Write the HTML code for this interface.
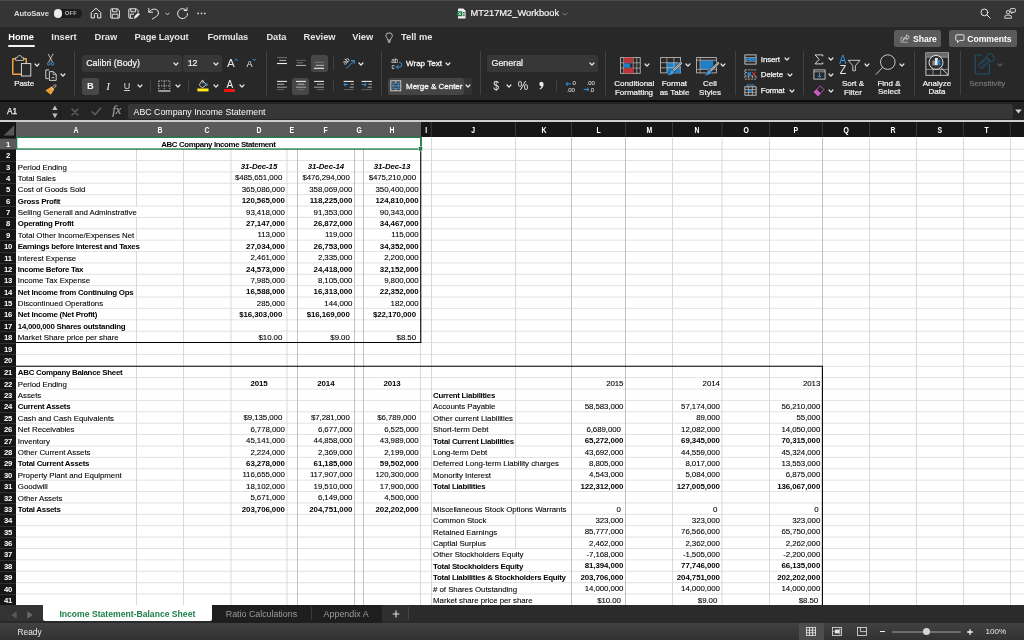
<!DOCTYPE html>
<html lang="en"><head><meta charset="utf-8"><title>MT217M2_Workbook</title>
<style>
*{box-sizing:border-box;margin:0;padding:0}
html,body{width:1024px;height:640px;overflow:hidden;background:#282828}
body{font-family:"Liberation Sans",sans-serif;color:#fff;-webkit-font-smoothing:antialiased}
#app{will-change:transform;position:relative;width:1024px;height:640px;overflow:hidden;background:#282828}
.abs{position:absolute}
svg{display:block;overflow:visible}
/* title bar */
#titlebar{position:absolute;left:0;top:0;width:1024px;height:27px;background:#353535;border-top:1px solid #4b4b4b}
#ribbon{position:absolute;left:0;top:27px;width:1024px;height:73px;background:#282828}
.t{position:absolute;white-space:nowrap;line-height:1}
.tab{position:absolute;top:32.1px;font-size:9.3px;font-weight:bold;color:#e4e4e4;white-space:nowrap;line-height:10px}
.tab.on{color:#fff}
.lbl{position:absolute;font-size:8px;color:#e6e6e6;white-space:nowrap;line-height:9px;text-align:center}
.vsep{position:absolute;width:1px;background:#3e3e3e;top:51px;height:44px}
.box{position:absolute;background:#363636;border-radius:2.5px}
.btnon{position:absolute;background:#454545;border-radius:2.5px}
/* formula bar */
#fbar{position:absolute;left:0;top:100px;width:1024px;height:22.3px;background:#242424;border-top:2.1px solid #0b0b0b}
#fbar .line{position:absolute;left:0;top:18.3px;width:1024px;height:1.7px;background:#cdcdcd}
#fbar .under{position:absolute;left:0;top:20px;width:1024px;height:0.4px;background:#3a3a3a}
/* column header */
#colhdr{position:absolute;left:0;top:122.1px;width:1024px;height:14.6px;background:#161616}
.ch{position:absolute;top:0;height:14.6px;background:#161616;color:#fff;font-weight:bold;font-size:8.2px;line-height:17.8px;text-align:center;overflow:hidden}
.ch.sel{background:#5b5b5b}
.corner{position:absolute;left:0;top:0;width:16px;height:14.6px;background:#161616}
/* grid */
#grid{position:absolute;left:0;top:0;width:1024px;height:605px;overflow:hidden;pointer-events:none}
#grid:before{content:"";position:absolute;left:0;top:136.8px;width:1024px;height:468.2px;background:#fff}
#gl{position:absolute;left:0;top:0}
#rowhdr{position:absolute;left:0;top:0;width:16px;height:605px}
#rowhdr:before{content:"";position:absolute;left:0;top:136.8px;width:16px;height:468.2px;background:#161616}
.rh{position:absolute;left:0;width:16px;height:11.42px;line-height:11.5px;color:#fff;font-weight:bold;font-size:7.7px;text-align:center;letter-spacing:-0.2px;border-top:1px solid #303030;overflow:hidden}
.rh.sel{background:#5b5b5b}
.c{position:absolute;height:11.42px;line-height:13.4px;font-size:7.9px;color:#000;white-space:nowrap;letter-spacing:-0.05px;-webkit-text-stroke:0.09px #000}
.c.b{font-weight:bold;letter-spacing:-0.27px;-webkit-text-stroke:0}
.c.i{font-style:italic}
.c.n{letter-spacing:-0.08px;margin-top:-0.4px}
.c.n.b{letter-spacing:-0.08px}
.c.m{text-align:center}
.c.r{text-align:right}
/* bottom */
#tabbar{position:absolute;left:0;top:605px;width:1024px;height:18.4px;background:#2b2b2b}
#status{position:absolute;left:0;top:623.4px;width:1024px;height:16.6px;background:linear-gradient(#414141,#323232)}

.ch span{display:inline-block;transform:scaleX(0.84)}

</style></head>
<body>
<div id="app">
<div id="titlebar">
  <div class="t" style="left:14px;top:8.6px;font-size:7.6px;font-weight:bold;color:#dedede">AutoSave</div>
  <div class="abs" style="left:53.5px;top:7.6px;width:28.5px;height:9.8px;border-radius:5px;background:#1c1c1c"></div>
  <div class="abs" style="left:53.6px;top:8.1px;width:8.8px;height:8.8px;border-radius:50%;background:#ececec"></div>
  <div class="t" style="left:64.8px;top:9.6px;font-size:5.9px;font-weight:bold;color:#b9b9b9;letter-spacing:0.1px">OFF</div>
  <!-- home -->
  <svg class="abs" style="left:90px;top:5.6px" width="12" height="12" viewBox="0 0 12 12" fill="none" stroke="#e8e8e8" stroke-width="1"><path d="M1.2 5.6 L6 1.2 L10.8 5.6 V11 H7.6 V7.4 Q7.6 6.4 6 6.4 Q4.4 6.4 4.4 7.4 V11 H1.2 Z" stroke-linejoin="round"/></svg>
  <!-- save -->
  <svg class="abs" style="left:109.6px;top:7px" width="10.2" height="11" viewBox="0 0 11 11" preserveAspectRatio="none" fill="none" stroke="#e8e8e8" stroke-width="1"><path d="M1.6 0.8 H8.2 L10.2 2.6 V9.4 Q10.2 10.2 9.4 10.2 H1.6 Q0.8 10.2 0.8 9.4 V1.6 Q0.8 0.8 1.6 0.8 Z"/><path d="M2.8 0.8 V3.8 H7.6 V0.8"/><path d="M2.4 10.2 V6.2 H8.6 V10.2"/></svg>
  <!-- save as -->
  <svg class="abs" style="left:128.3px;top:7px" width="12" height="11" viewBox="0 0 12 11" fill="none" stroke="#e8e8e8" stroke-width="1"><path d="M5 10.2 H1.6 Q0.8 10.2 0.8 9.4 V1.6 Q0.8 0.8 1.6 0.8 H8.2 L10.2 2.6 V4.4"/><path d="M2.8 0.8 V3.8 H7.6 V0.8"/><path d="M2.4 10.2 V6.2 H6"/><path d="M6.2 10.4 L6.9 8 L10.2 4.9 L11.6 6.3 L8.4 9.6 Z" fill="#e8e8e8" stroke-width="0.6"/></svg>
  <!-- undo -->
  <svg class="abs" style="left:148.3px;top:5.6px" width="12" height="13" viewBox="0 0 12 13" fill="none" stroke="#e8e8e8" stroke-width="1" stroke-linecap="round" stroke-linejoin="round"><path d="M0.8 1.4 V5.2 H4.6"/><path d="M1 5 Q3.2 1.6 6.8 2 Q10.6 2.6 10.6 6 Q10.6 8.2 7.6 10 L4.4 12"/></svg>
  <svg class="abs" style="left:164.6px;top:10.6px" width="5" height="4" viewBox="0 0 5 4" fill="none" stroke="#d0d0d0" stroke-width="1"><path d="M0.6 0.8 L2.5 2.8 L4.4 0.8"/></svg>
  <!-- redo (circular arrow) -->
  <svg class="abs" style="left:175.6px;top:5.6px" width="13" height="13" viewBox="0 0 13 13" fill="none" stroke="#e8e8e8" stroke-width="1" stroke-linecap="round" stroke-linejoin="round"><path d="M10.6 3.6 A5 5 0 1 0 11.6 6.6"/><path d="M8.2 3.6 H11 V0.8"/></svg>
  <!-- dots -->
  <svg class="abs" style="left:197px;top:10.8px" width="9" height="3" viewBox="0 0 9 3" fill="#e0e0e0"><circle cx="1.2" cy="1.4" r="0.85"/><circle cx="4.5" cy="1.4" r="0.85"/><circle cx="7.8" cy="1.4" r="0.85"/></svg>
  <!-- excel doc icon -->
  <svg class="abs" style="left:457px;top:7px" width="9" height="11" viewBox="0 0 9 11"><path d="M1.6 0.4 H6.2 L8.6 2.8 V10 Q8.6 10.6 8 10.6 H1.6 Q1 10.6 1 10 V1 Q1 0.4 1.6 0.4 Z" fill="#f2f2f2"/><rect x="0" y="3.2" width="5.4" height="5" rx="0.6" fill="#1d7a45"/><path d="M1.5 4.4 L3.9 7 M3.9 4.4 L1.5 7" stroke="#fff" stroke-width="0.8"/><rect x="6" y="4" width="1.8" height="1" fill="#1d7a45"/><rect x="6" y="5.6" width="1.8" height="1" fill="#1d7a45"/><rect x="6" y="7.2" width="1.8" height="1" fill="#1d7a45"/></svg>
  <div class="t" style="left:470.4px;top:8px;font-size:9.3px;color:#f4f4f4;-webkit-text-stroke:0.2px #f4f4f4">MT217M2_Workbook</div>
  <svg class="abs" style="left:561.6px;top:11.2px" width="6" height="4" viewBox="0 0 6 4" fill="none" stroke="#858585" stroke-width="1"><path d="M0.5 0.7 L3 3.2 L5.5 0.7"/></svg>
  <!-- search -->
  <svg class="abs" style="left:980px;top:7.4px" width="11" height="11" viewBox="0 0 11 11" fill="none" stroke="#e8e8e8" stroke-width="1" stroke-linecap="round"><circle cx="4.4" cy="4.4" r="3.4"/><path d="M7 7 L10.2 10.2"/></svg>
  <!-- share people -->
  <svg class="abs" style="left:1004px;top:7px" width="12" height="11" viewBox="0 0 12 11" fill="none" stroke="#e8e8e8" stroke-width="0.9"><circle cx="4" cy="4.2" r="1.7"/><path d="M0.8 10.2 V9 Q0.8 7.2 2.6 7.2 H5.6 Q7.4 7.2 7.4 9 V10.2 Z" stroke-linejoin="round"/><rect x="6.2" y="0.6" width="5.2" height="3.6" rx="0.8"/><path d="M7.6 4.2 V5.6 L9 4.2"/></svg>
</div>
<div id="ribbon">
  <!-- tabs: coordinates relative to ribbon (top:27) -->
  <div class="tab on" style="left:8.2px;top:5.1px">Home</div>
  <div class="abs" style="left:8px;top:18.2px;width:27px;height:1.8px;border-radius:1px;background:#f2f2f2"></div>
  <div class="tab" style="left:51.3px;top:5.1px">Insert</div>
  <div class="tab" style="left:94.5px;top:5.1px">Draw</div>
  <div class="tab" style="left:134.5px;top:5.1px;letter-spacing:-0.12px">Page Layout</div>
  <div class="tab" style="left:207.5px;top:5.1px;letter-spacing:-0.17px">Formulas</div>
  <div class="tab" style="left:266.4px;top:5.1px">Data</div>
  <div class="tab" style="left:303.5px;top:5.1px">Review</div>
  <div class="tab" style="left:352.2px;top:5.1px">View</div>
  <svg class="abs" style="left:385.4px;top:5.2px" width="8.6" height="11.2" viewBox="0 0 10 13" fill="none" stroke="#e4e4e4" stroke-width="0.9" stroke-linecap="round"><path d="M3.2 9 Q3.2 7.8 2.2 6.8 Q1 5.6 1 4.4 Q1 1 4.8 1 Q8.6 1 8.6 4.4 Q8.6 5.6 7.4 6.8 Q6.4 7.8 6.4 9 Z"/><path d="M3.4 10.6 H6.2 M4 12 H5.6"/></svg>
  <div class="tab" style="left:401px;top:5.1px">Tell me</div>
  <!-- share / comments -->
  <div class="abs" style="left:894.2px;top:3.2px;width:47px;height:16.6px;border-radius:2.5px;background:#5b5b5b"></div>
  <svg class="abs" style="left:899.6px;top:6.4px" width="10" height="10" viewBox="0 0 10 10" fill="none" stroke="#e4e4e4" stroke-width="0.8" stroke-linecap="round" stroke-linejoin="round"><path d="M2.6 4.4 H1 V9.2 H7.6" stroke="#bdbdbd"/><path d="M3.2 7.2 Q3.6 3.8 6.8 3.6 V1.6 L9.4 4.2 L6.8 6.6 V5 Q4.6 5 3.2 7.2 Z"/></svg>
  <div class="t" style="left:913px;top:7.9px;font-size:8.6px;font-weight:bold;color:#fff">Share</div>
  <div class="abs" style="left:948.7px;top:3.2px;width:68.2px;height:16.6px;border-radius:2.5px;background:#5b5b5b"></div>
  <svg class="abs" style="left:954.6px;top:6.6px" width="10" height="10" viewBox="0 0 10 10" fill="none" stroke="#f0f0f0" stroke-width="0.9" stroke-linejoin="round"><path d="M1.4 0.8 H8.4 Q9 0.8 9 1.4 V5.8 Q9 6.4 8.4 6.4 H4.6 L2.6 8.6 V6.4 H1.4 Q0.8 6.4 0.8 5.8 V1.4 Q0.8 0.8 1.4 0.8 Z"/></svg>
  <div class="t" style="left:967.2px;top:7.9px;font-size:8.6px;font-weight:bold;color:#fff">Comments</div>
</div>
<div id="rb">
<svg class="abs" style="left:11px;top:54px" width="22" height="24" viewBox="0 0 22 24" ><rect x="1.75" y="4.7" width="13.5" height="15.6" rx="0.5" fill="none" stroke="#f2a43c" stroke-width="1.5"/><path d="M4.6 6.4 V3.6 H6.4 Q6.6 1.4 8.6 1.4 Q10.6 1.4 10.8 3.6 H12.6 V6.4 Z" fill="#282828" stroke="#d4d4d4" stroke-width="0.8" stroke-linejoin="round"/><rect x="10.4" y="9.6" width="9.4" height="12.4" fill="#282828" stroke="#e4e4e4" stroke-width="0.9"/></svg>
<svg class="abs" style="left:34.05px;top:62.50px" width="5.9" height="4.2" viewBox="0 0 5.9 4.2" fill="none" stroke="#ececec" stroke-width="1.2" stroke-linecap="round" stroke-linejoin="round"><path d="M1 1 L2.95 3.2 L4.9 1"/></svg>
<div class="t" style="top:78.80px;font-size:8px;line-height:9.20px;color:#f0f0f0;-webkit-text-stroke:0.22px #f0f0f0;left:-35.9px;width:120px;text-align:center;letter-spacing:-0.15px;">Paste</div>
<svg class="abs" style="left:46px;top:52.6px" width="10" height="14" viewBox="0 0 10 14" ><path d="M2.1 0.8 L6.5 9.2 M7.1 0.8 L2.7 9.2" stroke="#e8e8e8" stroke-width="0.75" fill="none"/><circle cx="2.7" cy="10.8" r="1.3" fill="none" stroke="#3a9be6" stroke-width="0.9"/><circle cx="6.5" cy="10.8" r="1.3" fill="none" stroke="#3a9be6" stroke-width="0.9"/></svg>
<svg class="abs" style="left:44.6px;top:68.8px" width="13" height="13" viewBox="0 0 13 13" ><path d="M3.6 9.6 H0.8 V0.9 H4.2" fill="none" stroke="#e0e0e0" stroke-width="0.9"/><path d="M4.4 2.6 H8.4 L11.2 5.4 V11.4 H4.4 Z" fill="#282828" stroke="#e0e0e0" stroke-width="0.9" stroke-linejoin="round"/><path d="M8.2 2.8 V5.6 H11" fill="none" stroke="#e0e0e0" stroke-width="0.7"/><path d="M6.6 8.6 H9.2" stroke="#e0e0e0" stroke-width="0.8"/></svg>
<svg class="abs" style="left:59.55px;top:72.50px" width="5.9" height="4.2" viewBox="0 0 5.9 4.2" fill="none" stroke="#ececec" stroke-width="1.2" stroke-linecap="round" stroke-linejoin="round"><path d="M1 1 L2.95 3.2 L4.9 1"/></svg>
<svg class="abs" style="left:44.8px;top:84.4px" width="12" height="12" viewBox="0 0 12 12" ><path d="M7.2 3.4 L9.6 0.9 Q10.4 0.5 10.9 1.1 Q11.4 1.7 10.8 2.4 L8.4 4.6" fill="none" stroke="#e0e0e0" stroke-width="0.75" stroke-linejoin="round"/><path d="M6.6 2.6 L9.2 5.4 L5.8 10.8 L0.4 6.6 Z" fill="#f2a43c"/><path d="M6.2 3 L8.8 5.8" stroke="#ffd9a0" stroke-width="0.9"/><path d="M2.2 7.4 L4.8 5 M3.8 8.8 L6.2 6.2" stroke="#c47a18" stroke-width="0.5"/></svg>
<div class="abs" style="left:74.00px;top:51.2px;width:1px;height:43.80px;background:#414141"></div>
<div class="abs" style="left:82.3px;top:55px;width:99.60px;height:16.70px;background:#373737;border-radius:2.5px"></div>
<div class="t" style="top:58.48px;font-size:8.9px;line-height:10.23px;color:#f4f4f4;-webkit-text-stroke:0.22px #f4f4f4;left:86.2px;">Calibri (Body)</div>
<svg class="abs" style="left:173.45px;top:61.60px" width="5.9" height="4.2" viewBox="0 0 5.9 4.2" fill="none" stroke="#ececec" stroke-width="1.2" stroke-linecap="round" stroke-linejoin="round"><path d="M1 1 L2.95 3.2 L4.9 1"/></svg>
<div class="abs" style="left:183.3px;top:55px;width:38.50px;height:16.70px;background:#373737;border-radius:2.5px"></div>
<div class="t" style="top:58.48px;font-size:8.9px;line-height:10.23px;color:#f4f4f4;-webkit-text-stroke:0.22px #f4f4f4;left:187.8px;letter-spacing:-0.3px;">12</div>
<svg class="abs" style="left:213.45px;top:61.60px" width="5.9" height="4.2" viewBox="0 0 5.9 4.2" fill="none" stroke="#ececec" stroke-width="1.2" stroke-linecap="round" stroke-linejoin="round"><path d="M1 1 L2.95 3.2 L4.9 1"/></svg>
<div class="t" style="top:55.93px;font-size:11.6px;line-height:13.34px;color:#e8e8e8;left:227px;">A</div>
<svg class="abs" style="left:233.6px;top:57.6px" width="5" height="4" viewBox="0 0 5 4" ><path d="M0.8 2.6 L2.3 0.9 L3.8 2.6" fill="none" stroke="#3a9be6" stroke-width="0.9"/></svg>
<div class="t" style="top:59.01px;font-size:9.2px;line-height:10.58px;color:#e8e8e8;left:246.4px;">A</div>
<svg class="abs" style="left:252px;top:57.8px" width="5" height="4" viewBox="0 0 5 4" ><path d="M0.8 0.9 L2.3 2.6 L3.8 0.9" fill="none" stroke="#3a9be6" stroke-width="0.9"/></svg>
<div class="abs" style="left:82.3px;top:77.6px;width:16.60px;height:17.10px;background:#474747;border-radius:2.5px"></div>
<div class="t" style="top:80.80px;font-size:9.4px;line-height:10.81px;color:#f4f4f4;font-weight:bold;left:30.5px;width:120px;text-align:center;">B</div>
<div class="t" style="top:80.56px;font-size:9.8px;line-height:11.27px;color:#e8e8e8;-webkit-text-stroke:0.1px #e8e8e8;left:48.2px;width:120px;text-align:center;font-family:'Liberation Serif',serif;font-style:italic;">I</div>
<div class="t" style="top:80.53px;font-size:9px;line-height:10.35px;color:#dcdcdc;left:67px;width:120px;text-align:center;">U</div>
<div class="abs" style="left:123.8px;top:90.4px;width:6.4px;height:0.8px;background:#d0d0d0"></div>
<svg class="abs" style="left:137.05px;top:84.10px" width="5.9" height="4.2" viewBox="0 0 5.9 4.2" fill="none" stroke="#ececec" stroke-width="1.2" stroke-linecap="round" stroke-linejoin="round"><path d="M1 1 L2.95 3.2 L4.9 1"/></svg>
<div class="abs" style="left:150.00px;top:80.4px;width:1px;height:11.80px;background:#414141"></div>
<svg class="abs" style="left:158.4px;top:79.6px" width="13" height="13" viewBox="0 0 13 13" ><g stroke="#d8d8d8" stroke-width="0.75" stroke-dasharray="1.3 1" fill="none"><path d="M0.7 0.9 H12 M0.7 0.9 V10.4 M11.9 0.9 V10.4 M6.3 0.9 V10.4 M0.7 5.8 H12"/></g><path d="M0.3 11 H12.3" stroke="#f4f4f4" stroke-width="1.1"/></svg>
<svg class="abs" style="left:174.85px;top:84.10px" width="5.9" height="4.2" viewBox="0 0 5.9 4.2" fill="none" stroke="#ececec" stroke-width="1.2" stroke-linecap="round" stroke-linejoin="round"><path d="M1 1 L2.95 3.2 L4.9 1"/></svg>
<div class="abs" style="left:188.30px;top:80.4px;width:1px;height:11.80px;background:#414141"></div>
<svg class="abs" style="left:196.6px;top:79.4px" width="13" height="13" viewBox="0 0 13 13" ><path d="M5.2 1.4 L9.4 5.6 L6 8.4 Q5.2 8.8 4.4 8.2 L2.8 6.6 Q2.2 5.8 2.8 5 Z" fill="none" stroke="#e4e4e4" stroke-width="0.85" stroke-linejoin="round"/><path d="M6 0.8 V4.4" stroke="#e4e4e4" stroke-width="0.8"/><path d="M9.9 3.8 Q11.2 5.6 10.6 6.6 Q9.9 7.2 9.3 6.5 Q9 5.6 9.9 3.8 Z" fill="#3a9be6"/><rect x="0.4" y="9.5" width="11.1" height="2.9" fill="#ffea1e"/></svg>
<svg class="abs" style="left:212.55px;top:84.10px" width="5.9" height="4.2" viewBox="0 0 5.9 4.2" fill="none" stroke="#ececec" stroke-width="1.2" stroke-linecap="round" stroke-linejoin="round"><path d="M1 1 L2.95 3.2 L4.9 1"/></svg>
<div class="t" style="top:79.15px;font-size:10px;line-height:11.50px;color:#f0f0f0;left:169.8px;width:120px;text-align:center;">A</div>
<div class="abs" style="left:224px;top:88.9px;width:11.1px;height:2.9px;background:#f01414"></div>
<svg class="abs" style="left:239.05px;top:84.10px" width="5.9" height="4.2" viewBox="0 0 5.9 4.2" fill="none" stroke="#ececec" stroke-width="1.2" stroke-linecap="round" stroke-linejoin="round"><path d="M1 1 L2.95 3.2 L4.9 1"/></svg>
<div class="abs" style="left:266.00px;top:51.2px;width:1px;height:43.80px;background:#414141"></div>
<svg class="abs" style="left:276px;top:50px" width="14" height="48" viewBox="0 0 14 48" ><line x1="1" x2="11" y1="7.5" y2="7.5" stroke="#8a8a8a" stroke-width="0.7"/><line x1="3.1999999999999886" x2="10.199999999999989" y1="10.399999999999999" y2="10.399999999999999" stroke="#c4c4c4" stroke-width="0.9"/><line x1="1" x2="11" y1="13.5" y2="13.5" stroke="#f0f0f0" stroke-width="1.1"/></svg>
<svg class="abs" style="left:295px;top:50px" width="14" height="48" viewBox="0 0 14 48" ><line x1="1" x2="11" y1="10.399999999999999" y2="10.399999999999999" stroke="#7a7a7a" stroke-width="0.7"/><line x1="2" x2="8" y1="12.799999999999997" y2="12.799999999999997" stroke="#8c8c8c" stroke-width="0.8"/><line x1="1" x2="11" y1="15.400000000000006" y2="15.400000000000006" stroke="#bdbdbd" stroke-width="0.95"/></svg>
<div class="abs" style="left:311px;top:55px;width:17.00px;height:16.90px;background:#474747;border-radius:2.5px"></div>
<svg class="abs" style="left:313.2px;top:50px" width="14" height="48" viewBox="0 0 14 48" ><line x1="1.0" x2="11.0" y1="12.299999999999997" y2="12.299999999999997" stroke="#8a8a8a" stroke-width="0.7"/><line x1="2.8000000000000114" x2="11.0" y1="15.299999999999997" y2="15.299999999999997" stroke="#c4c4c4" stroke-width="0.9"/><line x1="1.0" x2="11.0" y1="18.299999999999997" y2="18.299999999999997" stroke="#f0f0f0" stroke-width="1.1"/></svg>
<div class="abs" style="left:333.00px;top:57px;width:1px;height:12.80px;background:#414141"></div>
<svg class="abs" style="left:342.6px;top:56.6px" width="13" height="13" viewBox="0 0 13 13" ><path d="M3.4 11.4 L10.8 4 M11.2 3.6 H8.2 M11.2 3.6 V6.6" stroke="#3a9be6" stroke-width="0.95" fill="none" stroke-linecap="round"/><text x="0" y="6.6" font-family="Liberation Sans, sans-serif" font-size="6.6" fill="#e8e8e8" letter-spacing="-0.2" transform="rotate(-45 3 5)">ab</text></svg>
<svg class="abs" style="left:358.25px;top:61.60px" width="5.9" height="4.2" viewBox="0 0 5.9 4.2" fill="none" stroke="#ececec" stroke-width="1.2" stroke-linecap="round" stroke-linejoin="round"><path d="M1 1 L2.95 3.2 L4.9 1"/></svg>
<svg class="abs" style="left:276px;top:50px" width="14" height="48" viewBox="0 0 14 48" ><line x1="1" x2="11" y1="31.400000000000006" y2="31.400000000000006" stroke="#f0f0f0" stroke-width="1.05"/><line x1="1" x2="8.199999999999989" y1="34.2" y2="34.2" stroke="#c4c4c4" stroke-width="0.9"/><line x1="1" x2="11" y1="37.2" y2="37.2" stroke="#b0b0b0" stroke-width="0.9"/><line x1="1" x2="8.199999999999989" y1="39.599999999999994" y2="39.599999999999994" stroke="#7a7a7a" stroke-width="0.7"/></svg>
<div class="abs" style="left:292.4px;top:77.6px;width:16.90px;height:17.10px;background:#474747;border-radius:2.5px"></div>
<svg class="abs" style="left:294.9px;top:50px" width="14" height="48" viewBox="0 0 14 48" ><line x1="1.0" x2="11.0" y1="31.400000000000006" y2="31.400000000000006" stroke="#f0f0f0" stroke-width="1.05"/><line x1="2.6000000000000227" x2="9.399999999999977" y1="34.2" y2="34.2" stroke="#c4c4c4" stroke-width="0.9"/><line x1="1.0" x2="11.0" y1="37.2" y2="37.2" stroke="#b0b0b0" stroke-width="0.9"/><line x1="2.6000000000000227" x2="9.399999999999977" y1="39.599999999999994" y2="39.599999999999994" stroke="#7a7a7a" stroke-width="0.7"/></svg>
<svg class="abs" style="left:313.1px;top:50px" width="14" height="48" viewBox="0 0 14 48" ><line x1="1.0" x2="11.0" y1="31.400000000000006" y2="31.400000000000006" stroke="#f0f0f0" stroke-width="1.05"/><line x1="3.8000000000000114" x2="11.0" y1="34.2" y2="34.2" stroke="#c4c4c4" stroke-width="0.9"/><line x1="1.0" x2="11.0" y1="37.2" y2="37.2" stroke="#b0b0b0" stroke-width="0.9"/><line x1="3.8000000000000114" x2="11.0" y1="39.599999999999994" y2="39.599999999999994" stroke="#7a7a7a" stroke-width="0.7"/></svg>
<div class="abs" style="left:333.00px;top:80.4px;width:1px;height:11.80px;background:#414141"></div>
<svg class="abs" style="left:342.6px;top:78px" width="12" height="14" viewBox="0 0 12 14" ><line x1="0.6" x2="10.8" y1="3.4" y2="3.4" stroke="#f0f0f0" stroke-width="1.05"/><line x1="7.6" x2="10.8" y1="6.2" y2="6.2" stroke="#c4c4c4" stroke-width="0.9"/><line x1="6.6" x2="10.8" y1="9.2" y2="9.2" stroke="#b0b0b0" stroke-width="0.9"/><line x1="0.6" x2="10.8" y1="11.6" y2="11.6" stroke="#7a7a7a" stroke-width="0.7"/><path d="M5.4 6.6 H0.9 M2.7 4.9 L0.9 6.6 L2.7 8.3" stroke="#3a9be6" stroke-width="0.95" fill="none"/></svg>
<svg class="abs" style="left:361.4px;top:78px" width="12" height="14" viewBox="0 0 12 14" ><line x1="0.6" x2="10.8" y1="3.4" y2="3.4" stroke="#f0f0f0" stroke-width="1.05"/><line x1="7.6" x2="10.8" y1="6.2" y2="6.2" stroke="#c4c4c4" stroke-width="0.9"/><line x1="6.6" x2="10.8" y1="9.2" y2="9.2" stroke="#b0b0b0" stroke-width="0.9"/><line x1="0.6" x2="10.8" y1="11.6" y2="11.6" stroke="#7a7a7a" stroke-width="0.7"/><path d="M0.7 6.6 H5.2 M3.4 4.9 L5.2 6.6 L3.4 8.3" stroke="#3a9be6" stroke-width="0.95" fill="none"/></svg>
<div class="abs" style="left:381.00px;top:51.2px;width:1px;height:43.80px;background:#414141"></div>
<svg class="abs" style="left:391.4px;top:57.6px" width="12" height="12" viewBox="0 0 12 12" ><text x="0.2" y="4.8" font-family="Liberation Sans, sans-serif" font-size="6.4" fill="#e8e8e8" letter-spacing="-0.2">ab</text><text x="0.4" y="10.6" font-family="Liberation Sans, sans-serif" font-size="6.4" fill="#e8e8e8">c</text><path d="M8.4 4.6 H9.2 Q10.8 4.8 10.8 6.8 Q10.8 9 8.8 9 H5.6 M7.2 7.4 L5.4 9 L7.2 10.6" stroke="#3a9be6" stroke-width="0.95" fill="none" stroke-linecap="round"/></svg>
<div class="t" style="top:58.87px;font-size:8.05px;line-height:9.26px;color:#f6f6f6;-webkit-text-stroke:0.28px #f6f6f6;left:406px;">Wrap Text</div>
<svg class="abs" style="left:445.25px;top:61.60px" width="5.9" height="4.2" viewBox="0 0 5.9 4.2" fill="none" stroke="#ececec" stroke-width="1.2" stroke-linecap="round" stroke-linejoin="round"><path d="M1 1 L2.95 3.2 L4.9 1"/></svg>
<div class="abs" style="left:387.9px;top:77.6px;width:75.90px;height:17.10px;background:#454545;border-radius:2.5px"></div>
<div class="abs" style="left:463.8px;top:77.6px;width:8.6px;height:17.1px;background:#323232;border-radius:0 2.5px 2.5px 0"></div>
<svg class="abs" style="left:389.8px;top:80px" width="12" height="12" viewBox="0 0 12 12" ><rect x="0.8" y="0.8" width="10" height="10" fill="none" stroke="#e4e4e4" stroke-width="0.85"/><path d="M5.8 0.8 V3.2 M5.8 8.4 V10.8" stroke="#e4e4e4" stroke-width="0.7"/><path d="M0.8 3.3 H10.8 M0.8 8.3 H10.8" stroke="#3a9be6" stroke-width="0.7"/><path d="M2.2 5.8 H9.4 M3.6 4.5 L2.2 5.8 L3.6 7.1 M8 4.5 L9.4 5.8 L8 7.1" stroke="#3a9be6" stroke-width="0.95" fill="none"/></svg>
<div class="t" style="top:81.60px;font-size:8px;line-height:9.20px;color:#f8f8f8;-webkit-text-stroke:0.28px #f8f8f8;left:406px;">Merge &amp; Center</div>
<svg class="abs" style="left:465.15px;top:84.10px" width="5.9" height="4.2" viewBox="0 0 5.9 4.2" fill="none" stroke="#ececec" stroke-width="1.2" stroke-linecap="round" stroke-linejoin="round"><path d="M1 1 L2.95 3.2 L4.9 1"/></svg>
<div class="abs" style="left:480.00px;top:51.2px;width:1px;height:43.80px;background:#414141"></div>
<div class="abs" style="left:487.3px;top:55px;width:110.50px;height:16.90px;background:#373737;border-radius:2.5px"></div>
<div class="t" style="top:58.48px;font-size:8.9px;line-height:10.23px;color:#f4f4f4;-webkit-text-stroke:0.22px #f4f4f4;left:491.5px;">General</div>
<svg class="abs" style="left:589.35px;top:61.60px" width="5.9" height="4.2" viewBox="0 0 5.9 4.2" fill="none" stroke="#ececec" stroke-width="1.2" stroke-linecap="round" stroke-linejoin="round"><path d="M1 1 L2.95 3.2 L4.9 1"/></svg>
<div class="t" style="top:78.38px;font-size:13.6px;line-height:15.64px;color:#e8e8e8;left:435.8px;width:120px;text-align:center;transform:scaleX(0.76);">$</div>
<svg class="abs" style="left:505.65px;top:84.10px" width="5.9" height="4.2" viewBox="0 0 5.9 4.2" fill="none" stroke="#ececec" stroke-width="1.2" stroke-linecap="round" stroke-linejoin="round"><path d="M1 1 L2.95 3.2 L4.9 1"/></svg>
<div class="t" style="top:78.84px;font-size:12.8px;line-height:14.72px;color:#e8e8e8;left:463px;width:120px;text-align:center;transform:scaleX(0.92);">%</div>
<svg class="abs" style="left:538.4px;top:81.4px" width="7" height="10" viewBox="0 0 7 10" ><path d="M3.2 0.8 Q5.6 0.8 5.6 3.4 Q5.6 6.4 2 8.4 L1.5 7.7 Q3.4 6.4 3.4 5.2 Q1.3 5.2 1.3 3 Q1.3 0.8 3.2 0.8 Z" fill="#e8e8e8"/></svg>
<div class="abs" style="left:556.00px;top:80.4px;width:1px;height:11.80px;background:#414141"></div>
<svg class="abs" style="left:564.6px;top:79.6px" width="13" height="13" viewBox="0 0 13 13" ><path d="M6 3.9 H0.9 M2.7 2.2 L0.9 3.9 L2.7 5.6" stroke="#3a9be6" stroke-width="0.95" fill="none"/><text x="7.4" y="5.4" font-family="Liberation Sans, sans-serif" font-size="6" fill="#f0f0f0">0</text><text x="2" y="11.6" font-family="Liberation Sans, sans-serif" font-size="6" fill="#f0f0f0" letter-spacing="-0.3">.00</text></svg>
<svg class="abs" style="left:582.6px;top:79.6px" width="13" height="13" viewBox="0 0 13 13" ><text x="4" y="5.4" font-family="Liberation Sans, sans-serif" font-size="6" fill="#f0f0f0" letter-spacing="-0.3">.00</text><path d="M0.7 9.4 H5.8 M4 7.7 L5.8 9.4 L4 11.1" stroke="#3a9be6" stroke-width="0.95" fill="none"/><text x="6.4" y="11.6" font-family="Liberation Sans, sans-serif" font-size="6" fill="#f0f0f0" letter-spacing="-0.3">.0</text></svg>
<div class="abs" style="left:605.30px;top:51.2px;width:1px;height:43.80px;background:#414141"></div>
<svg class="abs" style="left:619.6px;top:56.5px" width="21" height="17" viewBox="0 0 21 17" ><rect x="0.6" y="0.6" width="19.6" height="15.7" fill="none" stroke="#c8c8c8" stroke-width="0.8"/><path d="M0.6 5.8 H20.2 M0.6 11.1 H20.2 M3.6 0.6 V16.3 M13.2 0.6 V16.3 M16.8 0.6 V16.3" stroke="#c8c8c8" stroke-width="0.65"/><rect x="3.7" y="0.6" width="9.6" height="5.1" fill="#b93338"/><rect x="3.7" y="6.5" width="6.4" height="4" fill="#1f7fc6"/><rect x="3.7" y="11.2" width="10.2" height="5.1" fill="#b93338"/></svg>
<svg class="abs" style="left:643.85px;top:62.50px" width="5.9" height="4.2" viewBox="0 0 5.9 4.2" fill="none" stroke="#ececec" stroke-width="1.2" stroke-linecap="round" stroke-linejoin="round"><path d="M1 1 L2.95 3.2 L4.9 1"/></svg>
<div class="t" style="top:78.90px;font-size:8px;line-height:9.20px;color:#f0f0f0;-webkit-text-stroke:0.22px #f0f0f0;left:574.3px;width:120px;text-align:center;">Conditional</div>
<div class="t" style="top:87.60px;font-size:8px;line-height:9.20px;color:#f0f0f0;-webkit-text-stroke:0.22px #f0f0f0;left:574px;width:120px;text-align:center;letter-spacing:-0.02px;">Formatting</div>
<svg class="abs" style="left:660.2px;top:56.5px" width="23" height="20" viewBox="0 0 23 20" ><rect x="0.6" y="0.6" width="20" height="15.3" fill="none" stroke="#c8c8c8" stroke-width="0.8"/><rect x="6.9" y="5.7" width="13.7" height="10.2" fill="#1f7fc6"/><path d="M0.6 5.7 H20.6 M0.6 10.8 H20.6 M6.9 0.6 V15.9 M13.9 0.6 V15.9" stroke="#c8c8c8" stroke-width="0.65"/><path d="M21.0 6.2 L13.6 13.6" stroke="#282828" stroke-width="3.2" stroke-linecap="round"/><path d="M21.0 6.2 L13.6 13.6" stroke="#dcdcdc" stroke-width="2.1" stroke-linecap="round"/><path d="M21.0 6.2 L13.6 13.6" stroke="#3a3a3a" stroke-width="0.7" stroke-linecap="round"/><path d="M12.2 12.6 L14.6 15 Q13.2 18.6 6.6 18.6 Q10.2 16.6 10.0 14.2 Q10.6 12.6 12.2 12.6 Z" fill="#3a9be6" stroke="#282828" stroke-width="0.5"/></svg>
<svg class="abs" style="left:684.75px;top:62.50px" width="5.9" height="4.2" viewBox="0 0 5.9 4.2" fill="none" stroke="#ececec" stroke-width="1.2" stroke-linecap="round" stroke-linejoin="round"><path d="M1 1 L2.95 3.2 L4.9 1"/></svg>
<div class="t" style="top:78.90px;font-size:8px;line-height:9.20px;color:#f0f0f0;-webkit-text-stroke:0.22px #f0f0f0;left:614.4px;width:120px;text-align:center;">Format</div>
<div class="t" style="top:87.60px;font-size:8px;line-height:9.20px;color:#f0f0f0;-webkit-text-stroke:0.22px #f0f0f0;left:614.5px;width:120px;text-align:center;">as Table</div>
<svg class="abs" style="left:695.5px;top:56.5px" width="23" height="20" viewBox="0 0 23 20" ><rect x="0.6" y="0.6" width="19.9" height="15.3" fill="none" stroke="#c8c8c8" stroke-width="0.8"/><rect x="4.4" y="3.5" width="12.9" height="8.6" fill="#1f7fc6"/><path d="M0.6 3.2 H20.5 M0.6 12.4 H20.5 M4.1 0.6 V15.9" stroke="#c8c8c8" stroke-width="0.65"/><path d="M22.2 6.2 L14.8 13.6" stroke="#282828" stroke-width="3.2" stroke-linecap="round"/><path d="M22.2 6.2 L14.8 13.6" stroke="#dcdcdc" stroke-width="2.1" stroke-linecap="round"/><path d="M22.2 6.2 L14.8 13.6" stroke="#3a3a3a" stroke-width="0.7" stroke-linecap="round"/><path d="M13.4 12.6 L15.8 15 Q14.4 18.6 7.8 18.6 Q11.4 16.6 11.200000000000001 14.2 Q11.8 12.6 13.4 12.6 Z" fill="#3a9be6" stroke="#282828" stroke-width="0.5"/></svg>
<svg class="abs" style="left:720.05px;top:62.50px" width="5.9" height="4.2" viewBox="0 0 5.9 4.2" fill="none" stroke="#ececec" stroke-width="1.2" stroke-linecap="round" stroke-linejoin="round"><path d="M1 1 L2.95 3.2 L4.9 1"/></svg>
<div class="t" style="top:78.90px;font-size:8px;line-height:9.20px;color:#f0f0f0;-webkit-text-stroke:0.22px #f0f0f0;left:649.9px;width:120px;text-align:center;">Cell</div>
<div class="t" style="top:87.60px;font-size:8px;line-height:9.20px;color:#f0f0f0;-webkit-text-stroke:0.22px #f0f0f0;left:650px;width:120px;text-align:center;">Styles</div>
<div class="abs" style="left:734.50px;top:51.2px;width:1px;height:43.80px;background:#414141"></div>
<svg class="abs" style="left:743.6px;top:53.6px" width="13" height="11" viewBox="0 0 13 11" ><rect x="0.9" y="0.9" width="11.2" height="9.2" fill="none" stroke="#e0e0e0" stroke-width="0.8"/><path d="M0.9 3.6 H12.1 M0.9 7.2 H12.1" stroke="#e0e0e0" stroke-width="0.6"/><rect x="4.6" y="4" width="7.2" height="2.8" fill="#1f7fc6"/><path d="M6.6 5.4 H1.6 M3.2 4 L1.6 5.4 L3.2 6.8" stroke="#3a9be6" stroke-width="0.95" fill="none"/></svg>
<div class="t" style="top:54.99px;font-size:7.85px;line-height:9.03px;color:#f0f0f0;-webkit-text-stroke:0.25px #f0f0f0;left:760.8px;letter-spacing:-0.08px;">Insert</div>
<svg class="abs" style="left:784.45px;top:57.40px" width="5.9" height="4.2" viewBox="0 0 5.9 4.2" fill="none" stroke="#ececec" stroke-width="1.2" stroke-linecap="round" stroke-linejoin="round"><path d="M1 1 L2.95 3.2 L4.9 1"/></svg>
<svg class="abs" style="left:743.6px;top:69.3px" width="13" height="11" viewBox="0 0 13 11" ><path d="M0.9 0.9 H12.1 M0.9 0.9 V10.1 H12.1 V6.6 M0.9 7 H12.1 M4.4 7 V10.1 M8.4 7 V10.1 M0.9 3.6 H3.6" fill="none" stroke="#d0d0d0" stroke-width="0.7" stroke-dasharray="2.2 0.8"/><rect x="3.4" y="3.2" width="3.6" height="3.6" fill="#1f7fc6"/><path d="M7.8 3 L11.8 7 M11.8 3 L7.8 7" stroke="#e8383e" stroke-width="0.95"/></svg>
<div class="t" style="top:70.49px;font-size:7.85px;line-height:9.03px;color:#f0f0f0;-webkit-text-stroke:0.25px #f0f0f0;left:760.8px;letter-spacing:-0.08px;">Delete</div>
<svg class="abs" style="left:786.85px;top:72.90px" width="5.9" height="4.2" viewBox="0 0 5.9 4.2" fill="none" stroke="#ececec" stroke-width="1.2" stroke-linecap="round" stroke-linejoin="round"><path d="M1 1 L2.95 3.2 L4.9 1"/></svg>
<svg class="abs" style="left:743.6px;top:84.4px" width="13" height="12" viewBox="0 0 13 12" ><rect x="0.9" y="2.8" width="11.2" height="8.4" fill="none" stroke="#e0e0e0" stroke-width="0.8"/><path d="M0.9 5.6 H12.1 M0.9 8.4 H12.1 M4.4 2.8 V11.2 M8.4 2.8 V11.2" stroke="#e0e0e0" stroke-width="0.6"/><path d="M3.2 2.4 V0.9 H9.8 V2.4" stroke="#3a9be6" stroke-width="0.85" fill="none"/><rect x="4.7" y="5.9" width="3.4" height="2.3" fill="#1f7fc6"/></svg>
<div class="t" style="top:86.09px;font-size:7.85px;line-height:9.03px;color:#f0f0f0;-webkit-text-stroke:0.25px #f0f0f0;left:760.8px;letter-spacing:-0.2px;">Format</div>
<svg class="abs" style="left:788.75px;top:88.50px" width="5.9" height="4.2" viewBox="0 0 5.9 4.2" fill="none" stroke="#ececec" stroke-width="1.2" stroke-linecap="round" stroke-linejoin="round"><path d="M1 1 L2.95 3.2 L4.9 1"/></svg>
<div class="abs" style="left:803.10px;top:51.2px;width:1px;height:43.80px;background:#414141"></div>
<svg class="abs" style="left:814.4px;top:53.6px" width="10" height="11" viewBox="0 0 10 11" ><path d="M8.8 2.4 V0.9 H1 L5.2 5.4 L1 9.9 H8.8 V8.4" fill="none" stroke="#e8e8e8" stroke-width="0.9" stroke-linejoin="round"/></svg>
<svg class="abs" style="left:828.15px;top:57.40px" width="5.9" height="4.2" viewBox="0 0 5.9 4.2" fill="none" stroke="#ececec" stroke-width="1.2" stroke-linecap="round" stroke-linejoin="round"><path d="M1 1 L2.95 3.2 L4.9 1"/></svg>
<svg class="abs" style="left:812.6px;top:69.3px" width="13" height="11" viewBox="0 0 13 11" ><rect x="0.9" y="0.9" width="11.2" height="9.2" fill="none" stroke="#e0e0e0" stroke-width="0.8"/><path d="M0.9 2.8 H12.1" stroke="#e0e0e0" stroke-width="0.6"/><path d="M6.5 3.8 V8.2 M4.8 6.6 L6.5 8.3 L8.2 6.6" stroke="#3a9be6" stroke-width="0.95" fill="none"/></svg>
<svg class="abs" style="left:828.15px;top:72.90px" width="5.9" height="4.2" viewBox="0 0 5.9 4.2" fill="none" stroke="#ececec" stroke-width="1.2" stroke-linecap="round" stroke-linejoin="round"><path d="M1 1 L2.95 3.2 L4.9 1"/></svg>
<svg class="abs" style="left:813.4px;top:84.6px" width="12" height="12" viewBox="0 0 12 12" ><path d="M7.4 0.9 L11 4.5 L5 10.9 L1 6.9 Z" fill="none" stroke="#c85cc6" stroke-width="0.9" stroke-linejoin="round"/><path d="M3.6 4.3 L7.6 8.3 L5 10.9 L1 6.9 Z" fill="#c85cc6"/></svg>
<svg class="abs" style="left:828.15px;top:88.50px" width="5.9" height="4.2" viewBox="0 0 5.9 4.2" fill="none" stroke="#ececec" stroke-width="1.2" stroke-linecap="round" stroke-linejoin="round"><path d="M1 1 L2.95 3.2 L4.9 1"/></svg>
<svg class="abs" style="left:839px;top:54.4px" width="22" height="21" viewBox="0 0 22 21" ><text x="0.2" y="9.8" font-family="Liberation Sans, sans-serif" font-size="12.4" fill="#3a9be6" transform="scale(0.86 1)">A</text><text x="0.9" y="19.8" font-family="Liberation Sans, sans-serif" font-size="12.4" fill="#e8e8e8" transform="scale(0.86 1)">Z</text><path d="M9.2 6.3 H21 L16.4 11.7 V16.7 H13.8 V11.7 Z" fill="none" stroke="#e0e0e0" stroke-width="0.85" stroke-linejoin="round"/></svg>
<svg class="abs" style="left:863.85px;top:63.00px" width="5.9" height="4.2" viewBox="0 0 5.9 4.2" fill="none" stroke="#ececec" stroke-width="1.2" stroke-linecap="round" stroke-linejoin="round"><path d="M1 1 L2.95 3.2 L4.9 1"/></svg>
<div class="t" style="top:78.90px;font-size:8px;line-height:9.20px;color:#f0f0f0;-webkit-text-stroke:0.22px #f0f0f0;left:793px;width:120px;text-align:center;">Sort &amp;</div>
<div class="t" style="top:87.50px;font-size:8px;line-height:9.20px;color:#f0f0f0;-webkit-text-stroke:0.22px #f0f0f0;left:793px;width:120px;text-align:center;">Filter</div>
<svg class="abs" style="left:874.6px;top:54px" width="22" height="22" viewBox="0 0 22 22" ><circle cx="12.8" cy="8.1" r="7.3" fill="none" stroke="#e0e0e0" stroke-width="0.85"/><path d="M7.6 13.4 L0.8 20.6" stroke="#e0e0e0" stroke-width="0.85"/></svg>
<svg class="abs" style="left:899.35px;top:63.00px" width="5.9" height="4.2" viewBox="0 0 5.9 4.2" fill="none" stroke="#ececec" stroke-width="1.2" stroke-linecap="round" stroke-linejoin="round"><path d="M1 1 L2.95 3.2 L4.9 1"/></svg>
<div class="t" style="top:78.90px;font-size:8px;line-height:9.20px;color:#f0f0f0;-webkit-text-stroke:0.22px #f0f0f0;left:829px;width:120px;text-align:center;">Find &amp;</div>
<div class="t" style="top:87.40px;font-size:8px;line-height:9.20px;color:#f0f0f0;-webkit-text-stroke:0.22px #f0f0f0;left:829px;width:120px;text-align:center;">Select</div>
<div class="abs" style="left:913.80px;top:51.2px;width:1px;height:43.80px;background:#414141"></div>
<svg class="abs" style="left:924.6px;top:52.4px" width="24" height="24" viewBox="0 0 24 24" ><rect x="0.9" y="0.9" width="22.4" height="22.4" fill="none" stroke="#e0e0e0" stroke-width="0.85"/><rect x="1.3" y="1.6" width="21.6" height="3.4" fill="#6c6c6c"/><path d="M0.9 5.2 H23.3 M0.9 17.4 H23.3 M8 17.4 V23.3 M15.6 17.4 V23.3" stroke="#d0d0d0" stroke-width="0.6"/><circle cx="11" cy="10.4" r="7" fill="#333" stroke="#e8e8e8" stroke-width="0.95"/><rect x="7.4" y="8.6" width="2.8" height="4.6" fill="#8c8c8c"/><rect x="10" y="6" width="2.8" height="7.2" fill="#e8e8e8"/><rect x="12.6" y="7.8" width="2.8" height="5.4" fill="#1f7fc6"/><path d="M16.2 15.8 L23 22.8" stroke="#e8e8e8" stroke-width="0.95"/></svg>
<div class="t" style="top:78.90px;font-size:8px;line-height:9.20px;color:#f0f0f0;-webkit-text-stroke:0.22px #f0f0f0;left:876.9px;width:120px;text-align:center;">Analyze</div>
<div class="t" style="top:87.40px;font-size:8px;line-height:9.20px;color:#f0f0f0;-webkit-text-stroke:0.22px #f0f0f0;left:877px;width:120px;text-align:center;">Data</div>
<div class="abs" style="left:960.00px;top:51.2px;width:1px;height:43.80px;background:#414141"></div>
<svg class="abs" style="left:974.4px;top:52.4px" width="24" height="24" viewBox="0 0 24 24" ><path d="M8 3 H1.2 V22 H15.4 V12" fill="none" stroke="#1e5a7c" stroke-width="0.9"/><g transform="rotate(-40 12 9)" fill="none" stroke="#1e5a7c" stroke-width="0.9"><rect x="3.4" y="6.6" width="11" height="5.4" rx="0.8"/><path d="M5.6 8 H12.4 M5.6 10.4 H12.4" stroke-width="0.7"/><rect x="15" y="5.6" width="5.6" height="7.4" rx="0.9"/></g></svg>
<svg class="abs" style="left:997.05px;top:63.00px" width="5.9" height="4.2" viewBox="0 0 5.9 4.2" fill="none" stroke="#5e5e5e" stroke-width="1.2" stroke-linecap="round" stroke-linejoin="round"><path d="M1 1 L2.95 3.2 L4.9 1"/></svg>
<div class="t" style="top:78.90px;font-size:8px;line-height:9.20px;color:#7a7a7a;-webkit-text-stroke:0.15px #7a7a7a;left:927.3px;width:120px;text-align:center;">Sensitivity</div>
</div>
<div id="fbar">
  <div class="t" style="left:7px;top:5.2px;font-size:8.4px;color:#f4f4f4;-webkit-text-stroke:0.25px #f4f4f4">A1</div>
  <svg class="abs" style="left:51.6px;top:2.6px" width="6" height="14" viewBox="0 0 6 14" fill="#c0c0c0"><path d="M0.3 5 L2.9 0.4 L5.5 5 Z"/><path d="M0.3 8.6 L2.9 13.2 L5.5 8.6 Z"/></svg>
  <div class="abs" style="left:60.4px;top:0.6px;width:1px;height:17px;background:#1b1b1b"></div>
  <svg class="abs" style="left:71.2px;top:5.6px" width="8" height="8" viewBox="0 0 8 8" fill="none" stroke="#5a5a5a" stroke-width="1.6" stroke-linecap="round"><path d="M1 1 L7 7 M7 1 L1 7"/></svg>
  <svg class="abs" style="left:90.8px;top:5.4px" width="11" height="9" viewBox="0 0 11 9" fill="none" stroke="#5a5a5a" stroke-width="1.6" stroke-linecap="round" stroke-linejoin="round"><path d="M1 4.8 L4 7.6 L9.8 1"/></svg>
  <div class="t" style="left:112.2px;top:1.4px;font-family:'Liberation Serif',serif;font-style:italic;font-size:13px;color:#9c9c9c;letter-spacing:-0.3px;-webkit-text-stroke:0.2px #9c9c9c">fx</div>
  <div class="abs" style="left:128.4px;top:2.4px;width:885px;height:14.2px;border-radius:2px;background:#363636"></div>
  <div class="t" style="left:133.6px;top:5.6px;font-size:8.75px;color:#fafafa;letter-spacing:0.02px">ABC Company Income Statement</div>
  <svg class="abs" style="left:1015.2px;top:7.4px" width="7" height="5" viewBox="0 0 7 5" fill="#cfcfcf"><path d="M0.2 0.4 H6.8 L3.5 4.6 Z"/></svg>
  <div class="line"></div><div class="under"></div>
</div>
<div id="colhdr">
<div class="ch sel" style="left:16.00px;width:120.25px"><span>A</span></div>
<div class="ch sel" style="left:136.25px;width:47.25px"><span>B</span></div>
<div class="ch sel" style="left:183.50px;width:47.50px"><span>C</span></div>
<div class="ch sel" style="left:231.00px;width:56.00px"><span>D</span></div>
<div class="ch sel" style="left:287.00px;width:10.25px"><span>E</span></div>
<div class="ch sel" style="left:297.25px;width:57.25px"><span>F</span></div>
<div class="ch sel" style="left:354.50px;width:8.75px"><span>G</span></div>
<div class="ch sel" style="left:363.25px;width:57.50px"><span>H</span></div>
<div class="ch" style="left:420.75px;width:10.50px"><span>I</span></div>
<div class="ch" style="left:431.25px;width:84.25px"><span>J</span></div>
<div class="ch" style="left:515.50px;width:56.00px"><span>K</span></div>
<div class="ch" style="left:571.50px;width:54.10px"><span>L</span></div>
<div class="ch" style="left:625.60px;width:46.90px"><span>M</span></div>
<div class="ch" style="left:672.50px;width:49.50px"><span>N</span></div>
<div class="ch" style="left:722.00px;width:47.60px"><span>O</span></div>
<div class="ch" style="left:769.60px;width:52.80px"><span>P</span></div>
<div class="ch" style="left:822.40px;width:47.20px"><span>Q</span></div>
<div class="ch" style="left:869.60px;width:46.90px"><span>R</span></div>
<div class="ch" style="left:916.50px;width:46.90px"><span>S</span></div>
<div class="ch" style="left:963.40px;width:46.85px"><span>T</span></div>
<div class="ch" style="left:1010.25px;width:13.75px"><span></span></div>
<svg class="abs" style="left:0;top:0" width="1024" height="15" viewBox="0 0 1024 15" stroke="#3d3d3d" stroke-width="0.9"><line x1="431.25" x2="431.25" y1="0" y2="14.6"/><line x1="515.50" x2="515.50" y1="0" y2="14.6"/><line x1="571.50" x2="571.50" y1="0" y2="14.6"/><line x1="625.60" x2="625.60" y1="0" y2="14.6"/><line x1="672.50" x2="672.50" y1="0" y2="14.6"/><line x1="722.00" x2="722.00" y1="0" y2="14.6"/><line x1="769.60" x2="769.60" y1="0" y2="14.6"/><line x1="822.40" x2="822.40" y1="0" y2="14.6"/><line x1="869.60" x2="869.60" y1="0" y2="14.6"/><line x1="916.50" x2="916.50" y1="0" y2="14.6"/><line x1="963.40" x2="963.40" y1="0" y2="14.6"/><line x1="1010.25" x2="1010.25" y1="0" y2="14.6"/></svg>
<div class="corner"><svg width="16" height="15" viewBox="0 0 16 15"><path d="M14.2 3.2 L14.2 13.6 L3.6 13.6 Z" fill="#585858"/></svg></div>
</div>
<div id="grid">
<svg id="gl" width="1024" height="640" viewBox="0 0 1024 640">
<g stroke="#dadada" stroke-width="0.8">
<line x1="16" x2="1024" y1="149.25" y2="149.25"/><line x1="16" x2="1024" y1="160.50" y2="160.50"/><line x1="16" x2="1024" y1="171.88" y2="171.88"/><line x1="16" x2="1024" y1="183.26" y2="183.26"/><line x1="16" x2="1024" y1="194.63" y2="194.63"/><line x1="16" x2="1024" y1="206.01" y2="206.01"/><line x1="16" x2="1024" y1="217.39" y2="217.39"/><line x1="16" x2="1024" y1="228.77" y2="228.77"/><line x1="16" x2="1024" y1="240.15" y2="240.15"/><line x1="16" x2="1024" y1="251.52" y2="251.52"/><line x1="16" x2="1024" y1="262.90" y2="262.90"/><line x1="16" x2="1024" y1="274.28" y2="274.28"/><line x1="16" x2="1024" y1="285.66" y2="285.66"/><line x1="16" x2="1024" y1="297.04" y2="297.04"/><line x1="16" x2="1024" y1="308.41" y2="308.41"/><line x1="16" x2="1024" y1="319.79" y2="319.79"/><line x1="16" x2="1024" y1="331.17" y2="331.17"/><line x1="16" x2="1024" y1="342.55" y2="342.55"/><line x1="16" x2="1024" y1="354.40" y2="354.40"/><line x1="16" x2="1024" y1="366.25" y2="366.25"/><line x1="16" x2="1024" y1="377.64" y2="377.64"/><line x1="16" x2="1024" y1="389.03" y2="389.03"/><line x1="16" x2="1024" y1="400.42" y2="400.42"/><line x1="16" x2="1024" y1="411.81" y2="411.81"/><line x1="16" x2="1024" y1="423.20" y2="423.20"/><line x1="16" x2="1024" y1="434.59" y2="434.59"/><line x1="16" x2="1024" y1="445.98" y2="445.98"/><line x1="16" x2="1024" y1="457.37" y2="457.37"/><line x1="16" x2="1024" y1="468.76" y2="468.76"/><line x1="16" x2="1024" y1="480.15" y2="480.15"/><line x1="16" x2="1024" y1="491.54" y2="491.54"/><line x1="16" x2="1024" y1="502.93" y2="502.93"/><line x1="16" x2="1024" y1="514.32" y2="514.32"/><line x1="16" x2="1024" y1="525.71" y2="525.71"/><line x1="16" x2="1024" y1="537.10" y2="537.10"/><line x1="16" x2="1024" y1="548.49" y2="548.49"/><line x1="16" x2="1024" y1="559.88" y2="559.88"/><line x1="16" x2="1024" y1="571.27" y2="571.27"/><line x1="16" x2="1024" y1="582.66" y2="582.66"/><line x1="16" x2="1024" y1="594.05" y2="594.05"/>
</g><g stroke="#d9d9d9" stroke-width="1"><line x1="136.50" x2="136.50" y1="137.7" y2="605"/><line x1="183.50" x2="183.50" y1="137.7" y2="605"/><line x1="231.00" x2="231.00" y1="137.7" y2="605"/><line x1="287.00" x2="287.00" y1="137.7" y2="605"/><line x1="297.50" x2="297.50" y1="137.7" y2="605"/><line x1="354.50" x2="354.50" y1="137.7" y2="605"/><line x1="363.50" x2="363.50" y1="137.7" y2="605"/><line x1="420.50" x2="420.50" y1="137.7" y2="605"/><line x1="431.50" x2="431.50" y1="137.7" y2="605"/><line x1="515.50" x2="515.50" y1="137.7" y2="605"/><line x1="571.50" x2="571.50" y1="137.7" y2="605"/><line x1="625.50" x2="625.50" y1="137.7" y2="605"/><line x1="672.50" x2="672.50" y1="137.7" y2="605"/><line x1="722.00" x2="722.00" y1="137.7" y2="605"/><line x1="769.50" x2="769.50" y1="137.7" y2="605"/><line x1="822.50" x2="822.50" y1="137.7" y2="605"/><line x1="869.50" x2="869.50" y1="137.7" y2="605"/><line x1="916.50" x2="916.50" y1="137.7" y2="605"/><line x1="963.50" x2="963.50" y1="137.7" y2="605"/><line x1="1010.50" x2="1010.50" y1="137.7" y2="605"/>
</g>
<rect x="17" y="138.20" width="403" height="10.55" fill="#fff"/>
<rect x="135.35" y="206.71" width="1.8" height="9.98" fill="#fff"/><rect x="135.35" y="240.85" width="1.8" height="9.98" fill="#fff"/><rect x="514.60" y="458.07" width="1.8" height="9.99" fill="#fff"/><rect x="514.60" y="503.63" width="1.8" height="9.99" fill="#fff"/><rect x="514.60" y="549.19" width="1.8" height="9.99" fill="#fff"/><rect x="514.60" y="560.58" width="1.8" height="9.99" fill="#fff"/><rect x="514.60" y="571.97" width="1.8" height="9.99" fill="#fff"/><rect x="514.60" y="583.36" width="1.8" height="9.99" fill="#fff"/><rect x="514.60" y="594.75" width="1.8" height="9.99" fill="#fff"/>
<g stroke="#c2c2c2" stroke-width="1">
<line x1="297.5" x2="297.5" y1="149.25" y2="605.00"/><line x1="354.5" x2="354.5" y1="149.25" y2="605.00"/><line x1="363.5" x2="363.5" y1="149.25" y2="605.00"/><line x1="571.5" x2="571.5" y1="137.70" y2="605.00"/><line x1="625.5" x2="625.5" y1="137.70" y2="605.00"/><line x1="822.5" x2="822.5" y1="137.70" y2="366.25"/>
</g>
<g stroke="#000" stroke-width="1.1" fill="none">
<line x1="16" x2="421.3" y1="342.55" y2="342.55"/><line x1="420.75" x2="420.75" y1="149.25" y2="342.55"/><line x1="16" x2="823" y1="366.25" y2="366.25"/><line x1="822.4" x2="822.4" y1="366.25" y2="605"/>
</g>
<rect x="16.6" y="137.30" width="404.3" height="11.75" fill="none" stroke="#1e7a48" stroke-width="1.35"/>
<line x1="421.05" x2="421.05" y1="136.70" y2="147.25" stroke="#1e7a48" stroke-width="1.5"/>
<rect x="418.6" y="146.65" width="3.9" height="4.3" fill="#1e7a48" stroke="#fff" stroke-width="0.5"/>
</svg>
<div id="rowhdr">
<div class="rh sel" style="top:137.70px;height:11.55px">1</div>
<div class="rh" style="top:149.25px;height:11.25px">2</div>
<div class="rh" style="top:160.50px;height:11.38px">3</div>
<div class="rh" style="top:171.88px;height:11.38px">4</div>
<div class="rh" style="top:183.26px;height:11.38px">5</div>
<div class="rh" style="top:194.63px;height:11.38px">6</div>
<div class="rh" style="top:206.01px;height:11.38px">7</div>
<div class="rh" style="top:217.39px;height:11.38px">8</div>
<div class="rh" style="top:228.77px;height:11.38px">9</div>
<div class="rh" style="top:240.15px;height:11.38px">10</div>
<div class="rh" style="top:251.52px;height:11.38px">11</div>
<div class="rh" style="top:262.90px;height:11.38px">12</div>
<div class="rh" style="top:274.28px;height:11.38px">13</div>
<div class="rh" style="top:285.66px;height:11.38px">14</div>
<div class="rh" style="top:297.04px;height:11.38px">15</div>
<div class="rh" style="top:308.41px;height:11.38px">16</div>
<div class="rh" style="top:319.79px;height:11.38px">17</div>
<div class="rh" style="top:331.17px;height:11.38px">18</div>
<div class="rh" style="top:342.55px;height:11.85px">19</div>
<div class="rh" style="top:354.40px;height:11.85px">20</div>
<div class="rh" style="top:366.25px;height:11.39px">21</div>
<div class="rh" style="top:377.64px;height:11.39px">22</div>
<div class="rh" style="top:389.03px;height:11.39px">23</div>
<div class="rh" style="top:400.42px;height:11.39px">24</div>
<div class="rh" style="top:411.81px;height:11.39px">25</div>
<div class="rh" style="top:423.20px;height:11.39px">26</div>
<div class="rh" style="top:434.59px;height:11.39px">27</div>
<div class="rh" style="top:445.98px;height:11.39px">28</div>
<div class="rh" style="top:457.37px;height:11.39px">29</div>
<div class="rh" style="top:468.76px;height:11.39px">30</div>
<div class="rh" style="top:480.15px;height:11.39px">31</div>
<div class="rh" style="top:491.54px;height:11.39px">32</div>
<div class="rh" style="top:502.93px;height:11.39px">33</div>
<div class="rh" style="top:514.32px;height:11.39px">34</div>
<div class="rh" style="top:525.71px;height:11.39px">35</div>
<div class="rh" style="top:537.10px;height:11.39px">36</div>
<div class="rh" style="top:548.49px;height:11.39px">37</div>
<div class="rh" style="top:559.88px;height:11.39px">38</div>
<div class="rh" style="top:571.27px;height:11.39px">39</div>
<div class="rh" style="top:582.66px;height:11.39px">40</div>
<div class="rh" style="top:594.05px;height:11.39px">41</div>
</div>
<div class="c b m" style="top:137.70px;left:16.00px;width:404.75px;letter-spacing:-0.4px">ABC Company Income Statement</div>
<div class="c" style="top:160.50px;left:17.80px">Period Ending</div>
<div class="c b i m" style="top:160.50px;left:231.00px;width:56.00px;letter-spacing:-0.1px;margin-top:-0.8px">31-Dec-15</div>
<div class="c b i m" style="top:160.50px;left:297.25px;width:57.25px;letter-spacing:-0.1px;margin-top:-0.8px">31-Dec-14</div>
<div class="c b i m" style="top:160.50px;left:363.25px;width:57.50px;letter-spacing:-0.1px;margin-top:-0.8px">31-Dec-13</div>
<div class="c" style="top:171.88px;left:17.80px">Total Sales</div>
<div class="c n r" style="top:171.88px;right:741.80px">$485,651,000</div>
<div class="c n r" style="top:171.88px;right:674.30px">$476,294,000</div>
<div class="c n r" style="top:171.88px;right:608.05px">$475,210,000</div>
<div class="c" style="top:183.26px;left:17.80px">Cost of Goods Sold</div>
<div class="c n r" style="top:183.26px;right:739.20px">365,086,000</div>
<div class="c n r" style="top:183.26px;right:671.70px">358,069,000</div>
<div class="c n r" style="top:183.26px;right:605.45px">350,400,000</div>
<div class="c b" style="top:194.63px;left:17.80px">Gross Profit</div>
<div class="c b n r" style="top:194.63px;right:739.20px">120,565,000</div>
<div class="c b n r" style="top:194.63px;right:671.70px">118,225,000</div>
<div class="c b n r" style="top:194.63px;right:605.45px">124,810,000</div>
<div class="c" style="top:206.01px;left:17.80px">Selling Generall and Adminstrative</div>
<div class="c n r" style="top:206.01px;right:739.20px">93,418,000</div>
<div class="c n r" style="top:206.01px;right:671.70px">91,353,000</div>
<div class="c n r" style="top:206.01px;right:605.45px">90,343,000</div>
<div class="c b" style="top:217.39px;left:17.80px">Operating Profit</div>
<div class="c b n r" style="top:217.39px;right:739.20px">27,147,000</div>
<div class="c b n r" style="top:217.39px;right:671.70px">26,872,000</div>
<div class="c b n r" style="top:217.39px;right:605.45px">34,467,000</div>
<div class="c" style="top:228.77px;left:17.80px">Total Other Income/Expenses Net</div>
<div class="c n r" style="top:228.77px;right:739.20px">113,000</div>
<div class="c n r" style="top:228.77px;right:671.70px">119,000</div>
<div class="c n r" style="top:228.77px;right:605.45px">115,000</div>
<div class="c b" style="top:240.15px;left:17.80px">Earnings before Interest and Taxes</div>
<div class="c b n r" style="top:240.15px;right:739.20px">27,034,000</div>
<div class="c b n r" style="top:240.15px;right:671.70px">26,753,000</div>
<div class="c b n r" style="top:240.15px;right:605.45px">34,352,000</div>
<div class="c" style="top:251.52px;left:17.80px">Interest Expense</div>
<div class="c n r" style="top:251.52px;right:739.20px">2,461,000</div>
<div class="c n r" style="top:251.52px;right:671.70px">2,335,000</div>
<div class="c n r" style="top:251.52px;right:605.45px">2,200,000</div>
<div class="c b" style="top:262.90px;left:17.80px">Income Before Tax</div>
<div class="c b n r" style="top:262.90px;right:739.20px">24,573,000</div>
<div class="c b n r" style="top:262.90px;right:671.70px">24,418,000</div>
<div class="c b n r" style="top:262.90px;right:605.45px">32,152,000</div>
<div class="c" style="top:274.28px;left:17.80px">Income Tax Expense</div>
<div class="c n r" style="top:274.28px;right:739.20px">7,985,000</div>
<div class="c n r" style="top:274.28px;right:671.70px">8,105,000</div>
<div class="c n r" style="top:274.28px;right:605.45px">9,800,000</div>
<div class="c b" style="top:285.66px;left:17.80px">Net Income from Continuing Ops</div>
<div class="c b n r" style="top:285.66px;right:739.20px">16,588,000</div>
<div class="c b n r" style="top:285.66px;right:671.70px">16,313,000</div>
<div class="c b n r" style="top:285.66px;right:605.45px">22,352,000</div>
<div class="c" style="top:297.04px;left:17.80px">Discontinued Operations</div>
<div class="c n r" style="top:297.04px;right:739.20px">285,000</div>
<div class="c n r" style="top:297.04px;right:671.70px">144,000</div>
<div class="c n r" style="top:297.04px;right:605.45px">182,000</div>
<div class="c b" style="top:308.41px;left:17.80px">Net Income (Net Profit)</div>
<div class="c b n r" style="top:308.41px;right:741.80px">$16,303,000</div>
<div class="c b n r" style="top:308.41px;right:674.30px">$16,169,000</div>
<div class="c b n r" style="top:308.41px;right:608.05px">$22,170,000</div>
<div class="c b" style="top:319.79px;left:17.80px">14,000,000 Shares outstanding</div>
<div class="c" style="top:331.17px;left:17.80px">Market Share price per share</div>
<div class="c n r" style="top:331.17px;right:741.80px">$10.00</div>
<div class="c n r" style="top:331.17px;right:674.30px">$9.00</div>
<div class="c n r" style="top:331.17px;right:608.05px">$8.50</div>
<div class="c b" style="top:366.25px;left:17.80px">ABC Company Balance Sheet</div>
<div class="c" style="top:377.64px;left:17.80px">Period Ending</div>
<div class="c b n m" style="top:377.64px;left:231.00px;width:56.00px">2015</div>
<div class="c b n m" style="top:377.64px;left:297.25px;width:57.25px">2014</div>
<div class="c b n m" style="top:377.64px;left:363.25px;width:57.50px">2013</div>
<div class="c" style="top:389.03px;left:17.80px">Assets</div>
<div class="c b" style="top:400.42px;left:17.80px">Current Assets</div>
<div class="c" style="top:411.81px;left:17.80px">Cash and Cash Equivalents</div>
<div class="c n r" style="top:411.81px;right:741.80px">$9,135,000</div>
<div class="c n r" style="top:411.81px;right:674.30px">$7,281,000</div>
<div class="c n r" style="top:411.81px;right:608.05px">$6,789,000</div>
<div class="c" style="top:423.20px;left:17.80px">Net Receivables</div>
<div class="c n r" style="top:423.20px;right:739.20px">6,778,000</div>
<div class="c n r" style="top:423.20px;right:671.70px">6,677,000</div>
<div class="c n r" style="top:423.20px;right:605.45px">6,525,000</div>
<div class="c" style="top:434.59px;left:17.80px">Inventory</div>
<div class="c n r" style="top:434.59px;right:739.20px">45,141,000</div>
<div class="c n r" style="top:434.59px;right:671.70px">44,858,000</div>
<div class="c n r" style="top:434.59px;right:605.45px">43,989,000</div>
<div class="c" style="top:445.98px;left:17.80px">Other Current Assets</div>
<div class="c n r" style="top:445.98px;right:739.20px">2,224,000</div>
<div class="c n r" style="top:445.98px;right:671.70px">2,369,000</div>
<div class="c n r" style="top:445.98px;right:605.45px">2,199,000</div>
<div class="c b" style="top:457.37px;left:17.80px">Total Current Assets</div>
<div class="c b n r" style="top:457.37px;right:739.20px">63,278,000</div>
<div class="c b n r" style="top:457.37px;right:671.70px">61,185,000</div>
<div class="c b n r" style="top:457.37px;right:605.45px">59,502,000</div>
<div class="c" style="top:468.76px;left:17.80px">Property Plant and Equipment</div>
<div class="c n r" style="top:468.76px;right:739.20px">116,655,000</div>
<div class="c n r" style="top:468.76px;right:671.70px">117,907,000</div>
<div class="c n r" style="top:468.76px;right:605.45px">120,300,000</div>
<div class="c" style="top:480.15px;left:17.80px">Goodwill</div>
<div class="c n r" style="top:480.15px;right:739.20px">18,102,000</div>
<div class="c n r" style="top:480.15px;right:671.70px">19,510,000</div>
<div class="c n r" style="top:480.15px;right:605.45px">17,900,000</div>
<div class="c" style="top:491.54px;left:17.80px">Other Assets</div>
<div class="c n r" style="top:491.54px;right:739.20px">5,671,000</div>
<div class="c n r" style="top:491.54px;right:671.70px">6,149,000</div>
<div class="c n r" style="top:491.54px;right:605.45px">4,500,000</div>
<div class="c b" style="top:502.93px;left:17.80px">Total Assets</div>
<div class="c b n r" style="top:502.93px;right:739.20px">203,706,000</div>
<div class="c b n r" style="top:502.93px;right:671.70px">204,751,000</div>
<div class="c b n r" style="top:502.93px;right:605.45px">202,202,000</div>
<div class="c n r" style="top:377.64px;right:400.60px">2015</div>
<div class="c n r" style="top:377.64px;right:304.20px">2014</div>
<div class="c n r" style="top:377.64px;right:203.80px">2013</div>
<div class="c b" style="top:389.03px;left:433.05px">Current Liabilities</div>
<div class="c" style="top:400.42px;left:433.05px">Accounts Payable</div>
<div class="c n r" style="top:400.42px;right:400.60px">58,583,000</div>
<div class="c n r" style="top:400.42px;right:304.20px">57,174,000</div>
<div class="c n r" style="top:400.42px;right:203.80px">56,210,000</div>
<div class="c" style="top:411.81px;left:433.05px">Other current Liabilities</div>
<div class="c n r" style="top:411.81px;right:304.20px">89,000</div>
<div class="c n r" style="top:411.81px;right:203.80px">55,000</div>
<div class="c" style="top:423.20px;left:433.05px">Short-term Debt</div>
<div class="c n r" style="top:423.20px;right:403.20px">6,689,000</div>
<div class="c n r" style="top:423.20px;right:304.20px">12,082,000</div>
<div class="c n r" style="top:423.20px;right:203.80px">14,050,000</div>
<div class="c b" style="top:434.59px;left:433.05px">Total Current Liabilities</div>
<div class="c b n r" style="top:434.59px;right:400.60px">65,272,000</div>
<div class="c b n r" style="top:434.59px;right:304.20px">69,345,000</div>
<div class="c b n r" style="top:434.59px;right:203.80px">70,315,000</div>
<div class="c" style="top:445.98px;left:433.05px">Long-term Debt</div>
<div class="c n r" style="top:445.98px;right:400.60px">43,692,000</div>
<div class="c n r" style="top:445.98px;right:304.20px">44,559,000</div>
<div class="c n r" style="top:445.98px;right:203.80px">45,324,000</div>
<div class="c" style="top:457.37px;left:433.05px">Deferred Long-term Liability charges</div>
<div class="c n r" style="top:457.37px;right:400.60px">8,805,000</div>
<div class="c n r" style="top:457.37px;right:304.20px">8,017,000</div>
<div class="c n r" style="top:457.37px;right:203.80px">13,553,000</div>
<div class="c" style="top:468.76px;left:433.05px">Monority Interest</div>
<div class="c n r" style="top:468.76px;right:400.60px">4,543,000</div>
<div class="c n r" style="top:468.76px;right:304.20px">5,084,000</div>
<div class="c n r" style="top:468.76px;right:203.80px">6,875,000</div>
<div class="c b" style="top:480.15px;left:433.05px">Total Liabilities</div>
<div class="c b n r" style="top:480.15px;right:400.60px">122,312,000</div>
<div class="c b n r" style="top:480.15px;right:304.20px">127,005,000</div>
<div class="c b n r" style="top:480.15px;right:203.80px">136,067,000</div>
<div class="c" style="top:502.93px;left:433.05px">Miscellaneous Stock Options Warrants</div>
<div class="c n r" style="top:502.93px;right:403.20px">0</div>
<div class="c n r" style="top:502.93px;right:306.80px">0</div>
<div class="c n r" style="top:502.93px;right:205.36px">0</div>
<div class="c" style="top:514.32px;left:433.05px">Common Stock</div>
<div class="c n r" style="top:514.32px;right:400.60px">323,000</div>
<div class="c n r" style="top:514.32px;right:304.20px">323,000</div>
<div class="c n r" style="top:514.32px;right:203.80px">323,000</div>
<div class="c" style="top:525.71px;left:433.05px">Retained Earnings</div>
<div class="c n r" style="top:525.71px;right:400.60px">85,777,000</div>
<div class="c n r" style="top:525.71px;right:304.20px">76,566,000</div>
<div class="c n r" style="top:525.71px;right:203.80px">65,750,000</div>
<div class="c" style="top:537.10px;left:433.05px">Captial Surplus</div>
<div class="c n r" style="top:537.10px;right:400.60px">2,462,000</div>
<div class="c n r" style="top:537.10px;right:304.20px">2,362,000</div>
<div class="c n r" style="top:537.10px;right:203.80px">2,262,000</div>
<div class="c" style="top:548.49px;left:433.05px">Other Stockholders Equity</div>
<div class="c n r" style="top:548.49px;right:400.60px">-7,168,000</div>
<div class="c n r" style="top:548.49px;right:304.20px">-1,505,000</div>
<div class="c n r" style="top:548.49px;right:203.80px">-2,200,000</div>
<div class="c b" style="top:559.88px;left:433.05px">Total Stockholders Equity</div>
<div class="c b n r" style="top:559.88px;right:400.60px">81,394,000</div>
<div class="c b n r" style="top:559.88px;right:304.20px">77,746,000</div>
<div class="c b n r" style="top:559.88px;right:203.80px">66,135,000</div>
<div class="c b" style="top:571.27px;left:433.05px">Total Liabilities &amp; Stockholders Equity</div>
<div class="c b n r" style="top:571.27px;right:400.60px">203,706,000</div>
<div class="c b n r" style="top:571.27px;right:304.20px">204,751,000</div>
<div class="c b n r" style="top:571.27px;right:203.80px">202,202,000</div>
<div class="c" style="top:582.66px;left:433.05px"># of Shares Outstanding</div>
<div class="c n r" style="top:582.66px;right:400.60px">14,000,000</div>
<div class="c n r" style="top:582.66px;right:304.20px">14,000,000</div>
<div class="c n r" style="top:582.66px;right:203.80px">14,000,000</div>
<div class="c" style="top:594.05px;left:433.05px">Market share price per share</div>
<div class="c n r" style="top:594.05px;right:403.20px">$10.00</div>
<div class="c n r" style="top:594.05px;right:306.80px">$9.00</div>
<div class="c n r" style="top:594.05px;right:205.88px">$8.50</div>
</div>
<div id="tabbar">
  <div class="abs" style="left:0;top:0;width:43px;height:18.4px;background:#333"></div>
  <svg class="abs" style="left:10.6px;top:6.4px" width="6" height="8" viewBox="0 0 6 8" fill="#5a5a5a"><path d="M5.6 0.3 V7.7 L0.3 4 Z"/></svg>
  <svg class="abs" style="left:26.6px;top:6.4px" width="6" height="8" viewBox="0 0 6 8" fill="#6a6a6a"><path d="M0.4 0.3 V7.7 L5.7 4 Z"/></svg>
  <div class="abs" style="left:212.3px;top:0;width:169.3px;height:18.4px;background:#1e1e1e"></div>
  <div class="abs" style="left:0;top:15.7px;width:1024px;height:2.7px;background:#2a2a2a"></div>
  <div class="abs" style="left:212.3px;top:15.7px;width:169.3px;height:2.7px;background:#1e1e1e"></div>
  <div class="abs" style="left:43px;top:0;width:169.4px;height:15.8px;background:#fff;border-radius:0 0 2px 2px"></div>
  <div class="t" style="left:59.4px;top:4.6px;font-size:8.6px;font-weight:bold;color:#1b7f47;letter-spacing:0.01px">Income Statement-Balance Sheet</div>
  <div class="t" style="left:225.8px;top:4.5px;font-size:8.85px;color:#9c9c9c">Ratio Calculations</div>
  <div class="abs" style="left:310.8px;top:2.2px;width:1px;height:13px;background:#3a3a3a"></div>
  <div class="t" style="left:323.5px;top:4.5px;font-size:8.95px;color:#9c9c9c">Appendix A</div>
  <div class="abs" style="left:381.6px;top:0;width:26.4px;height:15.8px;background:#2f2f2f"></div>
  <svg class="abs" style="left:391.6px;top:5.4px" width="8" height="8" viewBox="0 0 8 8" stroke="#e4e4e4" stroke-width="1.1"><path d="M4 0.6 V7.4 M0.6 4 H7.4"/></svg>
  <div class="abs" style="left:408px;top:2.2px;width:1px;height:13px;background:#454545"></div>
</div>
<div id="status">
  <div class="t" style="left:17.6px;top:4.6px;font-size:8.3px;color:#ececec">Ready</div>
  <div class="abs" style="left:798.6px;top:0;width:25.4px;height:16.6px;background:#4d4d4d"></div>
  <svg class="abs" style="left:806.2px;top:3.8px" width="10" height="9" viewBox="0 0 10 9" fill="none" stroke="#f0f0f0" stroke-width="0.8"><rect x="0.5" y="0.5" width="9" height="8"/><path d="M3.5 0.5 V8.5 M6.5 0.5 V8.5 M0.5 3.2 H9.5 M0.5 5.8 H9.5"/></svg>
  <svg class="abs" style="left:832px;top:3.8px" width="10" height="9" viewBox="0 0 10 9" fill="none" stroke="#e4e4e4" stroke-width="0.8"><rect x="0.5" y="0.5" width="9" height="8"/><rect x="2.8" y="2.6" width="4.6" height="3.8" fill="#e4e4e4" stroke="none"/><path d="M1.2 4.5 H2.4 M7.8 1.6 V7.4"/></svg>
  <svg class="abs" style="left:857px;top:3.8px" width="10" height="9" viewBox="0 0 10 9" fill="none" stroke="#e4e4e4" stroke-width="0.8"><rect x="0.5" y="0.5" width="9" height="8"/><path d="M3.4 0.5 V4.6 H9.5"/></svg>
  <div class="abs" style="left:880.4px;top:7.6px;width:5px;height:1.3px;background:#f0f0f0"></div>
  <div class="abs" style="left:892px;top:7.4px;width:69px;height:1.8px;border-radius:1px;background:#6e6e6e"></div>
  <div class="abs" style="left:922.6px;top:4.6px;width:7.4px;height:7.4px;border-radius:50%;background:#d6d6d6"></div>
  <svg class="abs" style="left:967px;top:5.2px" width="6" height="6" viewBox="0 0 6 6" stroke="#f4f4f4" stroke-width="1.3"><path d="M3 0.2 V5.8 M0.2 3 H5.8"/></svg>
  <div class="t" style="left:985.4px;top:4.7px;font-size:8.1px;color:#ececec">100%</div>
</div>
</div>
</body></html>
